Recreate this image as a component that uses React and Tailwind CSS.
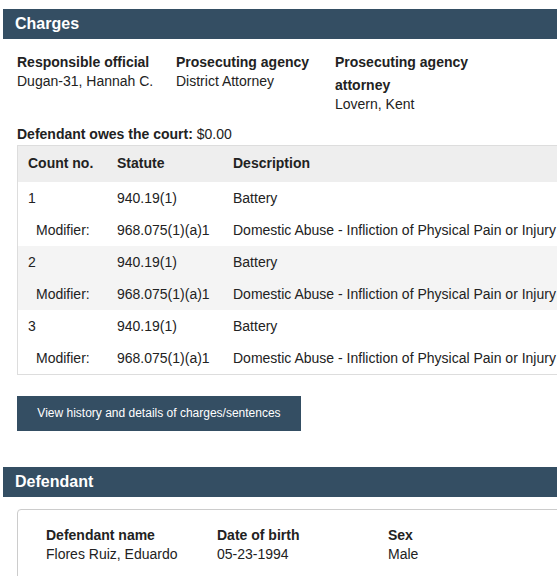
const charges = [
  { count: "1", statute: "940.19(1)", desc: "Battery" },
  { count: "2", statute: "940.19(1)", desc: "Battery" },
  { count: "3", statute: "940.19(1)", desc: "Battery" },
];

const MOD_STATUTE = "968.075(1)(a)1";
const MOD_DESC = "Domestic Abuse - Infliction of Physical Pain or Injury";

function SectionHeader({ title }) {
  return (
    <div className="ml-[3px] h-[30px] flex items-center px-[12px] bg-[#344e63] text-white text-[16px] font-bold">
      {title}
    </div>
  );
}

function Field({ label, value, width = "w-[159px]" }) {
  return (
    <div className={`${width} shrink-0 pr-[16px]`}>
      <div className="font-bold leading-[23px]">{label}</div>
      <div className="leading-[18px] -mt-[2px]">{value}</div>
    </div>
  );
}

export default function App() {
  return (
    <div
      className="w-[640px] overflow-hidden text-[14px] text-[#222] bg-white"
      style={{ fontFamily: '"Liberation Sans", Arial, sans-serif' }}
    >
      <div className="pt-[9px]">
        <SectionHeader title="Charges" />

        <div className="pl-[17px]">
          <div className="flex pt-[12px]">
            <Field label="Responsible official" value="Dugan-31, Hannah C." />
            <Field label="Prosecuting agency" value="District Attorney" />
            <Field label="Prosecuting agency attorney" value="Lovern, Kent" />
          </div>

          <div className="mt-[11px] leading-[20px]">
            <span className="font-bold">Defendant owes the court:</span> $0.00
          </div>

          <div className="mt-[1px] border border-[#ddd] w-[620px]">
            <div className="grid grid-cols-[89px_116px_1fr] h-[36px] items-center bg-[#eee] font-bold pb-[2px]">
              <div className="pl-[10px]">Count no.</div>
              <div className="pl-[10px]">Statute</div>
              <div className="pl-[10px]">Description</div>
            </div>
            {charges.map((c, i) => (
              <div key={c.count} className={i % 2 === 1 ? "bg-[#f4f4f4]" : "bg-white"}>
                <div className="grid grid-cols-[89px_116px_1fr] h-[32px] items-center">
                  <div className="pl-[10px]">{c.count}</div>
                  <div className="pl-[10px]">{c.statute}</div>
                  <div className="pl-[10px]">{c.desc}</div>
                </div>
                <div className="grid grid-cols-[89px_116px_1fr] h-[32px] items-center whitespace-nowrap">
                  <div className="pl-[18px]">Modifier:</div>
                  <div className="pl-[10px]">{MOD_STATUTE}</div>
                  <div className="pl-[10px]">{MOD_DESC}</div>
                </div>
              </div>
            ))}
          </div>

          <button className="mt-[21px] w-[284px] h-[35px] bg-[#344e63] text-white text-[12px] flex items-center justify-center pb-[2px]">
            View history and details of charges/sentences
          </button>
        </div>

        <div className="mt-[36px]">
          <SectionHeader title="Defendant" />
        </div>

        <div className="pl-[17px] pt-[12px]">
          <div className="border border-[#ccc] rounded-[4px] w-[620px] pl-[28px] pt-[14px] pb-[20px]">
            <div className="flex">
              <Field width="w-[171px]" label="Defendant name" value="Flores Ruiz, Eduardo" />
              <Field width="w-[171px]" label="Date of birth" value="05-23-1994" />
              <Field width="w-[171px]" label="Sex" value="Male" />
            </div>
          </div>
        </div>
      </div>
    </div>
  );
}
